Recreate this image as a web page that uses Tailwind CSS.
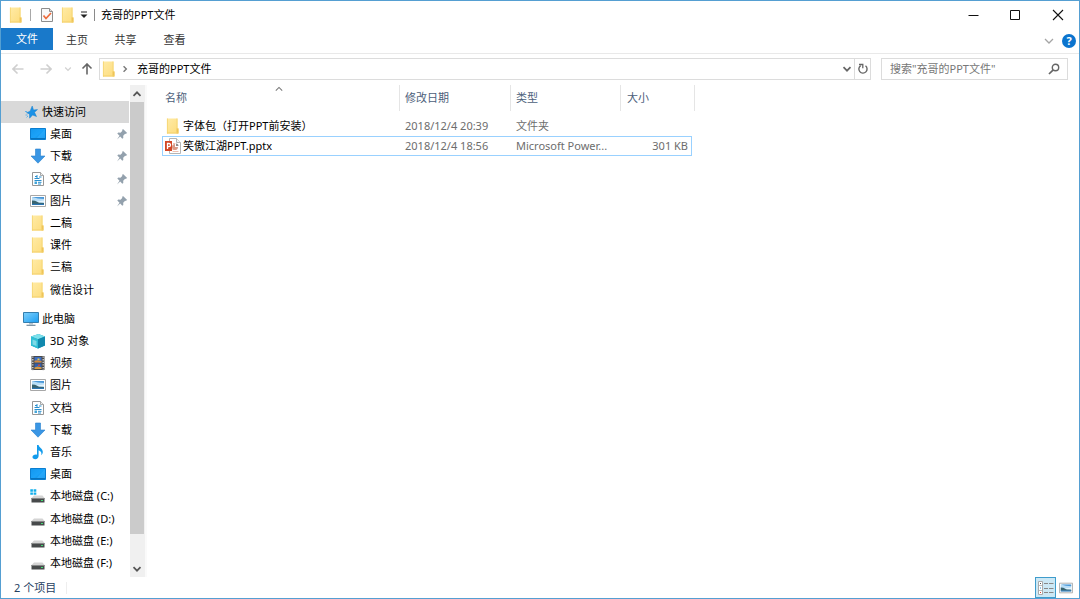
<!DOCTYPE html>
<html lang="zh-CN">
<head>
<meta charset="utf-8">
<meta name="viewport" content="width=device-width, initial-scale=1">
<title>充哥的PPT文件</title>
<script src="https://cdn.jsdelivr.net/npm/@tailwindcss/browser@4"></script>
</head>
<body class="bg-white">
<!-- Icon sprite -->
<svg width="0" height="0" class="absolute" aria-hidden="true">
  <defs>
    <linearGradient id="blue" x1="0" y1="0" x2="1" y2="1"><stop offset="0" stop-color="#1497ee"/><stop offset=".5" stop-color="#1ba2f8"/><stop offset="1" stop-color="#0a85de"/></linearGradient>
    <linearGradient id="fold" x1="0" y1="0" x2="1" y2="1"><stop offset="0" stop-color="#ffeba6"/><stop offset="1" stop-color="#fddc7c"/></linearGradient>
    <linearGradient id="pc" x1="0" y1="0" x2="1" y2="1"><stop offset="0" stop-color="#7fd0fb"/><stop offset="1" stop-color="#1a9df2"/></linearGradient>
    <symbol id="folder" viewBox="0 0 16 16"><path d="M2 .5h10.500V10l1 .6v4.900H2z" fill="url(#fold)"/><path d="M2.400.5v15M12 .5V11" stroke="#f6d777" fill="none"/><path d="M11.500 10.500h2v5h-2z" fill="#eec458"/><path d="M2 15h11" stroke="#f3d06c"/></symbol>
    <symbol id="star" viewBox="0 0 16 16"><path d="M9.200 2l1.300 4 4-.4-3 2.700 2 4.200-3.900-1.500-3 3.200-.1-4.300-3-1.200 3.600-1.500z" fill="#1c92e6" stroke="#1680cf" stroke-width=".5"/><path d="M2 7.500h2M2.500 11h2M3.500 13.500l1.500-1.500" stroke="#58aee9" stroke-width=".9"/></symbol>
    <symbol id="desktop" viewBox="0 0 16 16"><path d="M.5 2.500h15v11H.5z" fill="url(#blue)" stroke="#0b7ed0"/><path d="M15 3L6 13h9z" fill="#35b2ff" opacity=".55"/><path d="M1 12.500h14" stroke="#0873bd"/></symbol>
    <symbol id="down" viewBox="0 0 16 16"><path d="M5.500 1h5v7H15l-7 7.200L1 8h4.500z" fill="#3a96e4" stroke="#2981ce" stroke-width=".6"/></symbol>
    <symbol id="doc" viewBox="0 0 16 16"><path d="M2.500 1.500h8l3 3v10h-11z" fill="#fff" stroke="#979797"/><path d="M10.500 1.500v3h3" fill="#eee" stroke="#979797" stroke-width=".8"/><path d="M7 4v4M5 5.500h2M4.500 7.500h5M9 6h2.500M4.500 9.500h7M8 11.300h3.500M8 13h3" stroke="#2a8fce" stroke-width="1"/><path d="M4.500 10.500h2.500v2.500H4.500z" fill="#45a6d8"/></symbol>
    <symbol id="pic" viewBox="0 0 16 16"><path d="M.5 2.500h15v11H.5z" fill="#fff" stroke="#a7a7a7"/><path d="M2 4h12v8H2z" fill="#b9def7"/><path d="M2 4h12v2L8 5.500z" fill="#4b98d8"/><path d="M2 7.500l3 .3 3 1.500 6 .8v.9H2z" fill="#38636e"/><path d="M7 8.500l7-1v1.700l-5 .2z" fill="#e6f4fb"/><path d="M2 10.800h12V12H2z" fill="#2a75b4"/></symbol>
    <symbol id="monitor" viewBox="0 0 16 16"><path d="M.5 1.500h15v10H.5z" fill="url(#pc)" stroke="#347eae"/><path d="M6 12h4v1.500H6z" fill="#b8c5cf"/><path d="M3.500 14.300h9" stroke="#71899b" stroke-width="1.200"/></symbol>
    <symbol id="cube" viewBox="0 0 16 16"><path d="M1 3.500L8.500 1 15 3.500v9L8 15.500 1 12.500z" fill="#16a3bd"/><path d="M1 3.500L8.500 1 15 3.500 8 6.200z" fill="#7ce0ec"/><path d="M1 3.500l7 2.700v9.300l-7-3z" fill="#30bfd5"/><path d="M8 6.200l7-2.700v9l-7 3z" fill="#1189ae"/><path d="M2.500 6.500l4 1.500v5l-4-1.600z" fill="#b2edf3" opacity=".6"/></symbol>
    <symbol id="video" viewBox="0 0 16 16"><path d="M1.500 1h13v14h-13z" fill="#4b4b4b"/><path d="M2.800 1.500v14M13.200 1.500v14" stroke="#d8d8d8" stroke-width="1.300" stroke-dasharray="1.300 1.300"/><path d="M4.500 2h7v5.500h-7z" fill="#3d6fc4"/><path d="M4.500 8.500h7V14h-7z" fill="#315fae"/><path d="M4.500 5.800l3-.6 4 .8v1.500h-7z" fill="#d58a38"/><path d="M7.500 3.500h2v1.500h-2z" fill="#e8c94f"/><path d="M4.500 12.500l3-1 4 .7V14h-7z" fill="#d49a43"/><path d="M8 9.500h2v1.500H8z" fill="#cc493d"/></symbol>
    <symbol id="music" viewBox="0 0 16 16"><path d="M7 1h1.600c.4 2.800 4.400 3.500 4.200 7.200-.1 1.400-.9 2.400-1.600 3.100.6-2.300.2-4-2.600-5.100V12c0 1.900-1.500 3.200-3.300 3.200S2.500 14.300 2.500 13c0-1.700 2.200-2.900 4.500-2.300z" fill="#129bec"/></symbol>
    <symbol id="disk" viewBox="0 0 16 16"><path d="M4 7.500h8.500L14.500 10h-13z" fill="#d4d4d4"/><path d="M1.500 10h13v4.500h-13z" fill="#474a4b"/><path d="M1.500 10h13v1h-13z" fill="#858787"/><path d="M11 12h2v1h-2z" fill="#40dd72"/></symbol>
    <symbol id="diskc" viewBox="0 0 16 16"><use href="#disk"/><path d="M.3 1.300h2.600v2.400H.3zM3.600 1.300h2.700v2.400H3.600zM.3 4.400h2.600v2.400H.3zM3.600 4.400h2.700v2.400H3.600z" fill="#12aeea"/></symbol>
    <symbol id="pin" viewBox="0 0 12 12"><path d="M7 1l4.200 4-1.300.8-1 .1-1.700 1.800.1 2.300-1 .8L4.200 8.600 1 11.500 3.500 7.700 1.300 5.400l1-.8 2.200.1 1.700-1.700.1-1.200z" fill="#93a1ad"/></symbol>
    <symbol id="check" viewBox="0 0 16 16"><path d="M2.500 1.500h8l3 3v10h-11z" fill="#f8f9fa" stroke="#8d8d8d"/><path d="M10.500 1.500v3h3" fill="#ddd" stroke="#8d8d8d"/><path d="M4.500 8.500l2.500 3 5-5.500" fill="none" stroke="#ed6b3c" stroke-width="1.700"/></symbol>
    <symbol id="ppt" viewBox="0 0 16 16"><path d="M4.500.5h7l4 4v11h-11z" fill="#fff" stroke="#b5b5b5"/><path d="M11.500.5v4h4" fill="#f2f2f2" stroke="#b5b5b5"/><path d="M8 5.500h2.500M7.500 13.500h6M7.500 11.500h4" stroke="#ecc0b2"/><path d="M10 6v3h3a3 3 0 1 1-3-3z" fill="#d99a86"/><path d="M11 5.500a2.500 2.500 0 0 1 2.500 2.500H11z" fill="#8b8b8b"/><path d="M0 3h7v10H0z" fill="#d24726"/><path d="M2.500 11V5.500h1.500c2 0 2 3.200 0 3.200H2.500" fill="none" stroke="#fff" stroke-width="1.300"/></symbol>
    <symbol id="chev" viewBox="0 0 10 10"><path d="M1.500 3.200L5 6.700l3.500-3.500" fill="none" stroke="currentColor" stroke-width="1.700"/></symbol>
    <symbol id="thin" viewBox="0 0 10 10"><path d="M1 3l4 4 4-4" fill="none" stroke="currentColor" stroke-width="1.300"/></symbol>
    <symbol id="arrow" viewBox="0 0 12 12"><path d="M11.500 6H1M5.500 1.500L1 6l4.500 4.500" fill="none" stroke="currentColor" stroke-width="1.600"/></symbol>
  </defs>
</svg>

<div class="flex h-screen flex-col border border-[#559fd2] bg-white font-['Noto_Sans','Noto_Sans_CJK_SC',sans-serif] text-[11px] leading-4 text-black">
  <!-- Title bar -->
  <header class="flex h-[27px] shrink-0 items-center">
    <div class="flex flex-1 items-center pl-[7px]">
      <svg class="size-4"><use href="#folder"/></svg>
      <span class="ml-1.5 h-3 w-px bg-[#a8a8a8]"></span>
      <button class="ml-2" aria-label="属性"><svg class="size-4"><use href="#check"/></svg></button>
      <button class="ml-[5px]" aria-label="新建文件夹"><svg class="size-4"><use href="#folder"/></svg></button>
      <button class="ml-1" aria-label="自定义快速访问工具栏"><svg class="h-2 w-2" viewBox="0 0 8 8"><path d="M1 1h6" stroke="#222"/><path d="M.5 3.500h7L4 7z" fill="#222"/></svg></button>
      <span class="mr-1.5 ml-[6px] h-3 w-px bg-[#8a8a8a]"></span>
      <h1>充哥的PPT文件</h1>
    </div>
    <div class="flex text-[#111]">
      <button class="flex w-[42px] justify-center" aria-label="最小化"><svg class="size-3" viewBox="0 0 12 12"><path d="M1.500 6.500h10" stroke="currentColor"/></svg></button>
      <button class="flex w-[42px] justify-center" aria-label="最大化"><svg class="size-3" viewBox="0 0 12 12"><path d="M1.500 1.500h9v9h-9z" fill="none" stroke="currentColor"/></svg></button>
      <button class="flex w-[43px] justify-center" aria-label="关闭"><svg class="size-3" viewBox="0 0 12 12"><path d="M1 1l10 10M11 1L1 11" stroke="currentColor" stroke-width="1.100"/></svg></button>
    </div>
  </header>

  <!-- Ribbon tabs -->
  <nav class="flex h-[26px] shrink-0 items-start border-b border-[#e9e9e9] text-[#333]">
    <button class="h-[22px] w-[52px] bg-[#1979ca] text-white">文件</button>
    <button class="h-6 w-[48px]">主页</button>
    <button class="h-6 w-[49px]">共享</button>
    <button class="h-6 w-[49px]">查看</button>
    <div class="ml-auto flex h-[25px] items-center gap-2 pr-[3px]">
      <button aria-label="展开功能区"><svg class="size-2.5 text-[#a5a5a5]"><use href="#thin"/></svg></button>
      <button class="flex size-[14px] items-center justify-center rounded-full bg-[#0b74ce] font-bold text-white" aria-label="帮助">?</button>
    </div>
  </nav>

  <!-- Address bar -->
  <div class="flex h-[31px] shrink-0 items-center pr-[11px] pb-0.5 pl-[11px]">
    <button aria-label="后退"><svg class="size-3 text-[#cfcfcf]"><use href="#arrow"/></svg></button>
    <button class="ml-4" aria-label="前进"><svg class="size-3 rotate-180 text-[#cfcfcf]"><use href="#arrow"/></svg></button>
    <button class="ml-3" aria-label="最近浏览的位置"><svg class="size-2 text-[#d2d2d2]"><use href="#chev"/></svg></button>
    <button class="ml-[9px]" aria-label="向上"><svg class="size-3 rotate-90 text-[#666]"><use href="#arrow"/></svg></button>
    <div class="ml-1.5 flex h-[22px] flex-1 items-center border border-[#dcdcdc]">
      <svg class="ml-px size-4"><use href="#folder"/></svg>
      <svg class="ml-1 size-2 -rotate-90 text-[#777]"><use href="#chev"/></svg>
      <a href="#" class="ml-2 flex-1">充哥的PPT文件</a>
      <button class="px-0.5" aria-label="以前的位置"><svg class="size-2.5 text-[#666]"><use href="#chev"/></svg></button>
      <button class="flex h-full w-4 items-center justify-center border-l border-[#dcdcdc]" aria-label="刷新"><svg class="size-3 text-[#666]" viewBox="0 0 12 12"><path d="M8.500 2.800A4.100 4.100 0 1 1 3.700 2.600" fill="none" stroke="currentColor" stroke-width="1.400"/><path d="M2 1.500h3.800v3.800" fill="none" stroke="currentColor" stroke-width="1.300"/></svg></button>
    </div>
    <label class="ml-2.5 flex h-[22px] w-[187px] items-center border border-[#dcdcdc] pr-[7px] pl-2">
      <input type="search" aria-label="搜索" placeholder="搜索&quot;充哥的PPT文件&quot;" class="min-w-0 flex-1 outline-none placeholder:text-[#777]">
      <svg class="size-3 text-[#666]" viewBox="0 0 12 12"><circle cx="7.500" cy="4.500" r="3.200" fill="none" stroke="currentColor" stroke-width="1.400"/><path d="M5.200 6.800L1 11" stroke="currentColor" stroke-width="1.700"/></svg>
    </label>
  </div>

  <!-- Body -->
  <div class="flex min-h-0 flex-1">
    <aside class="flex w-32 shrink-0 flex-col pt-4 pb-[3px]">
      <ul id="quick" class="grid flex-[9] auto-rows-fr"></ul>
      <ul id="computer" class="mt-[7px] grid flex-[12] auto-rows-fr"></ul>
    </aside>
    <div class="ml-px flex w-[15px] shrink-0 flex-col bg-[#f0f0f0] text-[#555]">
      <button class="mr-px flex h-[17px] items-center justify-center" aria-label="向上滚动"><svg class="size-2.5 rotate-180"><use href="#chev"/></svg></button>
      <div class="mr-px flex-1 bg-[#cbcbcb]"></div>
      <button class="mr-px flex h-[43px] items-end justify-center pb-[3px]" aria-label="向下滚动"><svg class="size-2.5"><use href="#chev"/></svg></button>
    </div>
    <main class="min-w-0 flex-1 border-l-2 border-[#fafafa] pl-[15px]">
      <table class="block">
        <thead class="block text-[#4c607a]">
          <tr class="flex h-[26px] text-left">
            <th class="relative flex w-[238px] items-center border-r border-[#e5e5e5] pl-[3px] font-normal">名称<svg class="absolute top-0 left-[113px] size-2 rotate-180 text-[#777]"><use href="#thin"/></svg></th>
            <th class="flex w-[111px] items-center border-r border-[#e5e5e5] pl-[5px] font-normal">修改日期</th>
            <th class="flex w-[110px] items-center border-r border-[#e5e5e5] pl-[5px] font-normal">类型</th>
            <th class="flex w-[74px] items-center border-r border-[#e5e5e5] pl-1.5 font-normal">大小</th>
          </tr>
        </thead>
        <tbody class="block w-[530px] pt-[5px] text-[#6d6d6d]">
          <tr class="flex h-5 items-center border border-transparent">
            <td class="flex w-[237px] items-center gap-0.5 pl-[2px] text-black"><svg class="size-4"><use href="#folder"/></svg>字体包（打开PPT前安装）</td>
            <td class="w-[111px] pl-[5px]">2018/12/4 20:39</td>
            <td class="w-[110px] pl-[5px]">文件夹</td>
            <td class="flex-1"></td>
          </tr>
          <tr class="flex h-5 items-center border border-[#99d1ff]">
            <td class="flex w-[237px] items-center gap-0.5 pl-[2px] text-black"><svg class="size-4"><use href="#ppt"/></svg>笑傲江湖PPT.pptx</td>
            <td class="w-[111px] pl-[5px]">2018/12/4 18:56</td>
            <td class="w-[110px] pl-[5px]">Microsoft Power...</td>
            <td class="flex-1 pr-[3px] text-right">301 KB</td>
          </tr>
        </tbody>
      </table>
    </main>
  </div>

  <!-- Status bar -->
  <footer class="flex h-[21px] shrink-0 items-center pl-[13px] text-[#26405f]">
    <span>2 个项目</span>
    <span class="ml-2.5 h-3 w-px bg-[#eee]"></span>
    <div class="ml-auto flex items-center gap-[3px] pr-[6px]">
      <button class="flex size-[21px] items-center justify-center border border-[#3f9ccc] bg-[#cce8f5]" aria-label="详细信息"><svg class="size-4" viewBox="0 0 16 16"><path d="M.5 1.500h4v13h-4z" fill="#fff" stroke="#aaa"/><path d="M1 5.500h3M1 10.500h3" stroke="#bbb"/><path d="M2 3h1v1H2z" fill="#555"/><path d="M2 7.500h1v1H2z" fill="#2689c8"/><path d="M2 12h1v1H2z" fill="#d64534"/><path d="M6 3.500h4M11 3.500h4.500M6 8.500h4M11 8.500h4.500M6 12.500h4M11 12.500h4.500" stroke="#888"/></svg></button>
      <button aria-label="大缩略图"><svg class="size-[14px]"><use href="#pic"/></svg></button>
    </div>
  </footer>
</div>

<script>
  const quick = [['star','快速访问'],['desktop','桌面',1],['down','下载',1],['doc','文档',1],['pic','图片',1],['folder','二稿'],['folder','课件'],['folder','三稿'],['folder','微信设计']];
  const computer = [['monitor','此电脑'],['cube','3D 对象'],['video','视频'],['pic','图片'],['doc','文档'],['down','下载'],['music','音乐'],['desktop','桌面'],['diskc','本地磁盘 (C:)'],['disk','本地磁盘 (D:)'],['disk','本地磁盘 (E:)'],['disk','本地磁盘 (F:)']];
  const render = (id, items) => {
    document.getElementById(id).innerHTML = items.map(([icon, name, pinned], i) => {
      const indent = i ? 'gap-1 pl-[29px]' : 'gap-[3px] pl-[22px]';
      const active = id === 'quick' && !i ? 'bg-[#d9d9d9]' : '';
      const pin = pinned ? '<svg class="mr-px ml-auto size-3 shrink-0"><use href="#pin"/></svg>' : '';
      return `<li class="flex ${active}"><a href="#" class="flex flex-1 items-center whitespace-nowrap ${indent}"><svg class="size-4 shrink-0"><use href="#${icon}"/></svg>${name}${pin}</a></li>`;
    }).join('');
  };
  render('quick', quick);
  render('computer', computer);
</script>
</body>
</html>
